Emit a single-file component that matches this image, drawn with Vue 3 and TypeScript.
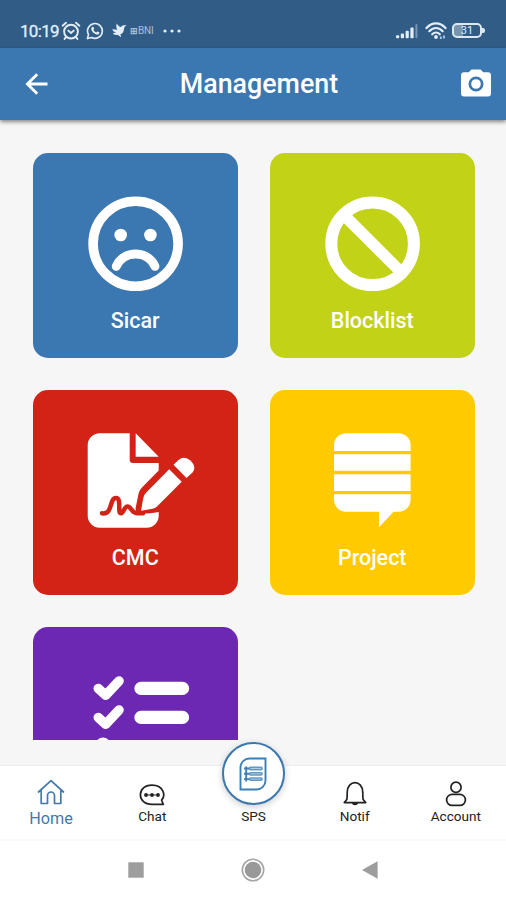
<script setup lang="ts">
import { ref } from 'vue'

type TileIcon = 'sad' | 'block' | 'sign' | 'stack' | 'tasks'

interface Tile {
  icon: TileIcon
  label: string
  tone: string
}

interface Tab {
  id: string
  label: string
}

const tiles: Tile[] = [
  { icon: 'sad', label: 'Sicar', tone: 'blue' },
  { icon: 'block', label: 'Blocklist', tone: 'lime' },
  { icon: 'sign', label: 'CMC', tone: 'red' },
  { icon: 'stack', label: 'Project', tone: 'yellow' },
  { icon: 'tasks', label: '', tone: 'purple' },
]

const tabs: Tab[] = [
  { id: 'home', label: 'Home' },
  { id: 'chat', label: 'Chat' },
  { id: 'sps', label: 'SPS' },
  { id: 'notif', label: 'Notif' },
  { id: 'account', label: 'Account' },
]

const active = ref('home')
</script>

<template>
  <div class="screen">
    <div class="status">
      <div class="status-left">
        <span class="time">10:19</span>
        <svg class="alarm" width="20" height="20" viewBox="0 0 20 20">
          <g fill="none" stroke="currentColor" stroke-width="1.9" stroke-linecap="round">
            <circle cx="10" cy="10.6" r="6.9" />
            <path d="M1.6 4.7 5 1.8M18.4 4.7 15 1.8M7.3 9.6l2.7 2.3 2.7-2.3M5 16.2l-1.4 1.7M15 16.2l1.4 1.7" />
          </g>
        </svg>
        <svg class="whatsapp" width="18" height="18" viewBox="0 0 18 18">
          <path d="M1.4 16.6l1.1-4A7.4 7.4 0 1 1 5.5 15.5z" fill="none" stroke="currentColor" stroke-width="1.6" stroke-linejoin="round" />
          <path d="M6.3 4.9c.7-.5 1.1-.2 1.4.7l.4 1c.2.5-.7 1-.6 1.3.6 1.2 1.5 2 2.700 2.5.4.1.9-1.1 1.3-.9l1.7.8c.5.3-.1 1.9-1 2.2-2.800.9-7.400-3.500-6.900-6.100.1-.7.5-1.200 1-1.500z" fill="currentColor" />
        </svg>
        <svg class="bird" width="15" height="15" viewBox="0 0 15 15">
          <path d="M4.7.5C6.2 2.800 7.400 3.700 9 4.100 10 2.300 11.600 1.900 14.800 2.500 12.800 3.200 12.200 4 11.900 6.500 11.500 9.800 10 11 8.500 11.100L9 14.300 5.600 11.700C3.700 12.200 2 11.800.6 10.500L4.200 9.300C2.300 9.100.9 8.200.2 6.300L5.300 6.800C4.200 5.200 4 3 4.700.5z" fill="currentColor" />
        </svg>
        <span class="bank"><b>⊞</b>BNI</span>
        <svg class="more" width="18" height="4" viewBox="0 0 18 4" fill="currentColor">
          <circle cx="2" cy="2" r="1.6" /><circle cx="9" cy="2" r="1.6" /><circle cx="16" cy="2" r="1.6" />
        </svg>
      </div>
      <div class="status-right">
        <svg width="24" height="16" viewBox="0 0 24 16" fill="currentColor">
          <rect x="1" y="12.2" width="3.2" height="3" rx="1" />
          <rect x="5.8" y="10.5" width="3.2" height="4.7" rx="1" />
          <rect x="10.6" y="7.8" width="3.2" height="7.4" rx="1" />
          <rect x="15.4" y="4.5" width="3.2" height="10.7" rx="1" />
          <rect x="20.4" y="1" width="2" height="14.2" rx="1" opacity=".4" />
        </svg>
        <svg width="22" height="18" viewBox="0 0 22 18">
          <g fill="none" stroke="currentColor" stroke-width="2.2" stroke-linecap="round">
            <path d="M1.5 6.1C7-.1 15-.1 20.500 6.100" />
            <path d="M4.300 9.200C8.200 4.900 13.800 4.900 17.700 9.200" />
            <path d="M7.200 12.300C9.500 9.900 12.500 9.900 14.800 12.300" />
          </g>
          <circle cx="11" cy="15" r="1.9" fill="currentColor" />
          <path d="M15.800 17V14.500M19 13.500v3" stroke="#a9cdec" stroke-width="1.8" />
        </svg>
        <div class="battery"><span>31</span></div>
      </div>
    </div>

    <header class="appbar">
      <svg class="back" width="24" height="24" viewBox="0 0 24 24">
        <path d="M22.5 12H2.800M12.200 2.200 2.400 12l9.800 9.800" fill="none" stroke="currentColor" stroke-width="2.8" />
      </svg>
      <h1>Management</h1>
      <svg width="30" height="28" viewBox="0 0 30 28">
        <path fill="currentColor" fill-rule="evenodd" d="M10.5.5h9L22.300 3.300H27a3 3 0 0 1 3 3V24.500a3 3 0 0 1-3 3H3a3 3 0 0 1-3-3V6.300a3 3 0 0 1 3-3H7.700zM15 7.500a7.500 7.500 0 1 0 0 15a7.500 7.500 0 0 0 0-15z" />
        <circle cx="15" cy="15" r="4.8" fill="currentColor" />
      </svg>
    </header>

    <main class="content">
      <div class="grid">
        <button v-for="tile in tiles" :key="tile.icon" class="tile" :class="tile.tone">
          <svg class="tile-icon" width="124" height="104" viewBox="40 40 124 104">
            <g v-if="tile.icon === 'sad'">
              <circle cx="102.6" cy="90.7" r="42.5" fill="none" stroke="currentColor" stroke-width="9.6" />
              <circle cx="87.7" cy="82" r="6.3" fill="currentColor" />
              <circle cx="117.4" cy="82" r="6.3" fill="currentColor" />
              <path d="M83.3 113.300C90.500 97 114.700 97 121.900 113.300" fill="none" stroke="currentColor" stroke-width="9" stroke-linecap="round" />
            </g>
            <g v-else-if="tile.icon === 'block'" fill="none" stroke="currentColor">
              <circle cx="102.6" cy="90.7" r="41.3" stroke-width="12" />
              <path d="M74 62.100 131.200 119.300" stroke-width="11.5" />
            </g>
            <g v-else-if="tile.icon === 'sign'" fill="currentColor">
              <path d="M66.700 43.300H96.700V70a3 3 0 0 0 3 3H125.700V80.500L109 97.500Q106.500 100 105.700 103L102.700 117.500Q102 123.500 108.500 123.700Q118 123.500 125.700 122V125.700a12 12 0 0 1-12 12h-47a12 12 0 0 1-12-12v-70.400a12 12 0 0 1 12-12z" />
              <path d="M102.700 43.300 125.700 66.700H102.700z" />
              <path d="M136.200 79.300 148.700 91.800 124 116.500Q122 118.200 119.500 118.800L108 120.700 110.300 108Q110.800 105 113 102.800z" />
              <path d="M140.500 74.800 145.500 70Q151 65.500 157.500 70.500Q164 77 159.500 82.500L153.500 88z" />
              <path class="ink" d="M69 123.300C80 125 76 108 83 108C89 108 84 123.500 88 123.300C91 123 91 116.500 94.500 116.500C98.500 116.500 98 123 104 123.300H110" />
            </g>
            <g v-else-if="tile.icon === 'stack'" fill="currentColor">
              <path d="M76 43.300h52.600a12 12 0 0 1 12 12V61H64V55.300a12 12 0 0 1 12-12z" />
              <path d="M64 64.300h76.600v16.400H64zM64 84.300h76.600V101H64z" />
              <path d="M64 104.300h76.600v5.400a12 12 0 0 1-12 12H123.600L109 137.300V121.700H76a12 12 0 0 1-12-12z" />
            </g>
            <g v-else fill="none" stroke="currentColor" stroke-linecap="round" stroke-linejoin="round">
              <path d="M65.300 61.500 72.700 68.300 86 54M65.300 90.500 72.700 97.300 86 83" stroke-width="9.6" />
              <path d="M108 61.400H149.500M108 90.400H149.500M108 120.400H149.500" stroke-width="13.3" />
              <circle cx="70" cy="118" r="7.6" fill="currentColor" stroke="none" />
            </g>
          </svg>
          <span class="tile-label">{{ tile.label }}</span>
        </button>
      </div>
    </main>

    <nav class="tabs">
      <button v-for="tab in tabs" :key="tab.id" class="tab" :class="[tab.id, { active: active === tab.id }]" @click="active = tab.id">
        <svg v-if="tab.id === 'home'" width="28" height="26" viewBox="0 0 28 26">
          <path d="M1.500 13 14 1.700 26.500 13M4.200 11.500V24.500H10.500V16.500a3.500 3.500 0 0 1 7 0V24.500H23.800V11.500" fill="none" stroke="currentColor" stroke-width="1.7" stroke-linejoin="round" stroke-linecap="round" />
        </svg>
        <svg v-else-if="tab.id === 'chat'" width="26" height="22" viewBox="0 0 26 22">
          <path d="M24.300 20.400H13C-2.500 20.400-2.500 1.200 13 1.200C24.500 1.200 27 11.500 22.600 16.200z" fill="none" stroke="currentColor" stroke-width="1.7" stroke-linejoin="round" />
          <path d="M6.500 11H19.500" stroke="currentColor" />
          <circle cx="7" cy="11" r="1.9" fill="currentColor" /><circle cx="13" cy="11" r="1.9" fill="currentColor" /><circle cx="19" cy="11" r="1.9" fill="currentColor" />
        </svg>
        <span v-else-if="tab.id === 'sps'" class="fab">
          <svg width="28" height="34" viewBox="0 0 28 34" fill="none" stroke="currentColor">
            <path d="M1.500 32.500V10.500a9 9 0 0 1 9-9H26.500V23.500a9 9 0 0 1-9 9z" stroke-width="1.9" />
            <path d="M11.500 11.500H22M11.500 16.800H22M11.500 22.100H22" stroke-width="3.8" stroke-linecap="round" opacity=".8" />
            <path d="M5 11.500H10M5 16.800H10M5 22.100H10M7.200 9.500v15" stroke-width="1.9" />
            <path d="M11.500 11.500H22M11.500 16.800H22M11.500 22.100H22" stroke="#b9d7ec" stroke-width=".8" />
          </svg>
        </span>
        <svg v-else-if="tab.id === 'notif'" width="24" height="26" viewBox="0 0 24 26">
          <path d="M3.800 18.500Q4.200 17 4.200 11.500C4.200-1.600 19.800-1.600 19.800 11.500Q19.800 17 20.200 18.500L22.700 21.600H1.300z" fill="none" stroke="currentColor" stroke-width="1.7" stroke-linejoin="round" />
          <path d="M8.800 22a3.300 3 0 0 0 6.400 0z" fill="currentColor" />
        </svg>
        <svg v-else width="22" height="26" viewBox="0 0 22 26" fill="none" stroke="currentColor" stroke-width="1.7">
          <circle cx="11" cy="6.2" r="5.1" />
          <rect x="1.6" y="13.4" width="18.8" height="11" rx="5.5" />
        </svg>
        <span class="tab-label">{{ tab.label }}</span>
      </button>
    </nav>

    <div class="system">
      <svg width="16" height="16" viewBox="0 0 16 16"><path d="M.3.3h15.400v15.400H.3z" fill="#9d9d9d" /></svg>
      <svg width="24" height="24" viewBox="0 0 24 24">
        <circle cx="12" cy="12" r="10.7" fill="none" stroke="#a6a6a6" stroke-width="1.6" />
        <circle cx="12" cy="12" r="8.3" fill="#999" />
      </svg>
      <svg width="16" height="18" viewBox="0 0 16 18"><path d="M0 9 15.600.3v17.400z" fill="#9d9d9d" /></svg>
    </div>
  </div>
</template>

<style>
body {
  margin: 0;
  overflow: hidden;
}
</style>

<style scoped>
.screen {
  display: flex;
  flex-direction: column;
  width: 506px;
  height: 900px;
  overflow: hidden;
  background: #f6f6f6;
  font-family: Roboto, 'Liberation Sans', sans-serif;
}

svg {
  display: block;
  flex: none;
}

button {
  margin: 0;
  padding: 0;
  border: 0;
  background: none;
  font: inherit;
}

.status {
  box-sizing: border-box;
  display: flex;
  flex: none;
  justify-content: space-between;
  height: 48px;
  padding: 13px 20px 0;
  background: #305c86;
  color: #e3eefa;
}

.status-left,
.status-right {
  display: flex;
  align-items: center;
  height: 35px;
}

.time {
  width: 41px;
  font-size: 17px;
  letter-spacing: -0.7px;
  line-height: 20px;
  -webkit-text-stroke: 0.3px;
}

.whatsapp {
  margin-left: 5px;
}

.bird {
  margin-left: 8px;
}

.bank {
  width: 25px;
  margin-left: 3px;
  color: #a9c0d8;
  font-size: 10px;
  letter-spacing: -0.1px;
  white-space: nowrap;
}

.bank b {
  font-size: 9px;
}

.more {
  margin-left: 8px;
}

.status-right {
  gap: 5.5px;
}

.battery {
  position: relative;
  box-sizing: border-box;
  width: 30px;
  height: 15px;
  margin-right: 4px;
  border: 2px solid #dce8f4;
  border-radius: 5px;
  background: linear-gradient(90deg, #7895b0 35%, transparent 35%);
  color: #e3eefa;
  font-size: 11px;
  line-height: 11px;
  text-align: center;
}

.battery::after {
  content: '';
  position: absolute;
  top: 3px;
  right: -5px;
  width: 3px;
  height: 5px;
  border-radius: 0 2px 2px 0;
  background: #dce8f4;
}

.appbar {
  box-sizing: border-box;
  z-index: 1;
  display: flex;
  flex: none;
  align-items: center;
  justify-content: space-between;
  height: 72px;
  padding: 0 15px 2px 25px;
  background: #3b77b0;
  color: #fff;
  box-shadow: 0 2px 4px rgba(0, 0, 0, 0.45);
}

.back {
  margin-top: 2px;
}

.appbar h1 {
  margin: 0;
  padding: 2px 0 0 8px;
  font-size: 26.8px;
  font-weight: 500;
  line-height: 32px;
}

.content {
  flex: none;
  height: 620px;
  overflow: hidden;
}

.grid {
  display: grid;
  grid-template-columns: repeat(2, 204.5px);
  grid-auto-rows: 204.5px;
  gap: 32.5px;
  padding: 33px;
}

.tile {
  display: flex;
  flex-direction: column;
  align-items: center;
  justify-content: flex-start;
  padding-top: 40px;
  border-radius: 15px;
  color: #fff;
}

.tile.blue { background: #3b77b0; }
.tile.lime { background: #c2d216; }
.tile.red { background: #d32316; }
.tile.yellow { background: #ffcb00; }
.tile.purple { background: #6c28b2; }

.ink {
  fill: none;
  stroke: #d32316;
  stroke-width: 4.5px;
  stroke-linecap: round;
  stroke-linejoin: round;
}

.tile-label {
  margin-top: 11px;
  font-size: 21.5px;
  font-weight: 500;
  line-height: 26px;
}

.tabs {
  display: grid;
  grid-template-rows: minmax(0, 1fr);
  grid-template-columns: repeat(5, 1fr);
  flex: none;
  box-sizing: border-box;
  height: 75px;
  margin-top: 26px;
  border-bottom: 2px solid #fafafa;
  background: #fff;
  box-shadow: 0 -1px 1px rgba(0, 0, 0, 0.03);
}

.tab {
  display: flex;
  flex-direction: column;
  align-items: center;
  justify-content: flex-end;
  min-height: 0;
  padding: 0 0 14px 1px;
  color: #222;
}

.tab.home {
  padding-bottom: 10px;
}

.tab.active {
  color: #4479a9;
}

.tab-label {
  margin-top: 1px;
  font-size: 13.6px;
  line-height: 17px;
}

.tab.active .tab-label {
  margin-top: 4px;
  font-size: 16.2px;
  line-height: 20px;
}

.chat .tab-label {
  margin-top: 2px;
}

.fab {
  display: flex;
  flex: none;
  align-items: center;
  justify-content: center;
  box-sizing: border-box;
  width: 63px;
  height: 63px;
  margin-bottom: 2px;
  border: 2px solid #3b77b0;
  border-radius: 50%;
  background: #fff;
  color: #3b7fb9;
  box-shadow: 0 2px 7px rgba(0, 0, 0, 0.2);
}

.system {
  display: flex;
  flex: 1;
  align-items: center;
  justify-content: space-between;
  padding: 0 128px 1px;
  background: #fff;
}
</style>
